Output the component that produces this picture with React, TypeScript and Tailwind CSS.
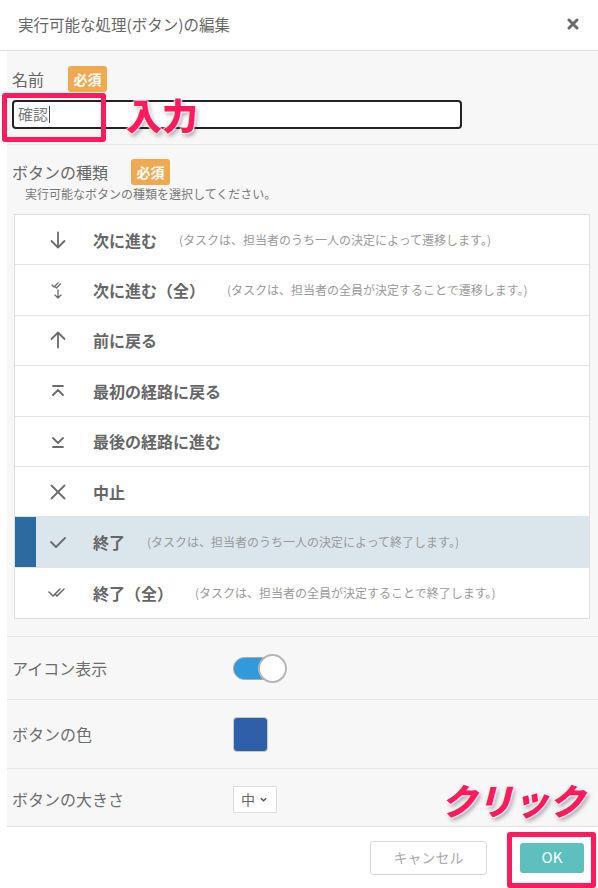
import React from 'react';

const FONT = 'font-["Noto_Sans_CJK_JP","Noto_Sans",sans-serif]';

type IconKind = 'down' | 'downAll' | 'up' | 'first' | 'last' | 'stop' | 'check' | 'checkAll';

function RowIcon({ kind }: { kind: IconKind }) {
  const common = {
    width: 20,
    height: 20,
    viewBox: '0 0 20 20',
    fill: 'none',
    stroke: '#6b6b6b',
    strokeWidth: 1.8,
    strokeLinecap: 'round' as const,
    strokeLinejoin: 'round' as const,
  };
  switch (kind) {
    case 'down':
      return (
        <svg {...common}>
          <path d="M10 2.5v15M3.5 11l6.5 6.5 6.5-6.5" />
        </svg>
      );
    case 'downAll':
      return (
        <svg {...common} strokeWidth={1.3}>
          <path d="M4 5l2 2 4-4M7 6.5l1.5 1.5 4-4" />
          <path d="M10 10v8M7 15l3 3 3-3" />
        </svg>
      );
    case 'up':
      return (
        <svg {...common}>
          <path d="M10 17.5v-15M3.5 9l6.5-6.5 6.5 6.5" />
        </svg>
      );
    case 'first':
      return (
        <svg {...common}>
          <path d="M5 5h10M5 14l5-5 5 5" />
        </svg>
      );
    case 'last':
      return (
        <svg {...common}>
          <path d="M5 7l5 5 5-5M5 16h10" />
        </svg>
      );
    case 'stop':
      return (
        <svg {...common}>
          <path d="M3.5 3.5l13 13M16.5 3.5l-13 13" />
        </svg>
      );
    case 'check':
      return (
        <svg {...common}>
          <path d="M3 10l5 5 9-9" />
        </svg>
      );
    case 'checkAll':
      return (
        <svg {...common} strokeWidth={1.6}>
          <path d="M1 9l4 4 7-7M7 11l2 2 7-7" />
        </svg>
      );
  }
}

const rows: { icon: IconKind; label: string; desc?: string; selected?: boolean }[] = [
  { icon: 'down', label: '次に進む', desc: '(タスクは、担当者のうち一人の決定によって遷移します。)' },
  { icon: 'downAll', label: '次に進む（全）', desc: '(タスクは、担当者の全員が決定することで遷移します。)' },
  { icon: 'up', label: '前に戻る' },
  { icon: 'first', label: '最初の経路に戻る' },
  { icon: 'last', label: '最後の経路に進む' },
  { icon: 'stop', label: '中止' },
  { icon: 'check', label: '終了', desc: '(タスクは、担当者のうち一人の決定によって終了します。)', selected: true },
  { icon: 'checkAll', label: '終了（全）', desc: '(タスクは、担当者の全員が決定することで終了します。)' },
];

function Badge() {
  return (
    <span className="inline-flex h-[26px] w-[39px] items-center justify-center rounded-[3px] bg-[#efa94f] text-[14px] font-bold text-white">
      必須
    </span>
  );
}

const outline =
  '[text-shadow:0_0_2px_#fff,0_0_2px_#fff,0_0_2px_#fff,0_0_3px_#fff,2px_3px_4px_rgba(0,0,0,0.35)]';

export default function App() {
  return (
    <div className={`relative h-[888px] w-[598px] overflow-hidden bg-white ${FONT} text-[#666]`}>
      {/* Header */}
      <div className="flex h-[51px] items-center justify-between border-b border-[#e2e2e2] pl-[18px] pr-[19px]">
        <span className="text-[15.5px] text-[#666]">実行可能な処理(ボタン)の編集</span>
        <svg width="12" height="12" viewBox="0 0 12 12" className="mb-[3px]">
          <path d="M2 2l8 8M10 2l-8 8" stroke="#6a6a6a" strokeWidth="3" strokeLinecap="round" />
        </svg>
      </div>

      {/* Body */}
      <div className="ml-[7px] h-[776px] border-b border-[#e2e2e2] bg-[#f7f7f7]">
        {/* Name */}
        <div className="h-[94px] border-b border-[#e5e5e5] pl-[5px] pt-[15px]">
          <div className="flex h-[26px] items-center gap-[24px]">
            <span className="text-[16px]">名前</span>
            <Badge />
          </div>
          <div className="mt-[8px] flex h-[29px] w-[450px] items-center rounded-[4px] border-2 border-[#222] bg-white pl-[4px] text-[15px] text-[#777]">
            確認<span className="ml-[1px] h-[17px] w-px bg-[#444]" />
          </div>
        </div>

        {/* Type */}
        <div className="flex flex-col border-b border-[#e5e5e5] pb-[17px] pt-[13px]">
          <div className="flex h-[28px] items-center gap-[23px] pl-[5px]">
            <span className="text-[16px]">ボタンの種類</span>
            <Badge />
          </div>
          <div className="pl-[18px] text-[12px] leading-[16px] text-[#777]">実行可能なボタンの種類を選択してください。</div>
          <div className="ml-[7px] mt-[12px] w-[576px] border border-[#dedede] bg-white">
            {rows.map((r, i) => (
              <div
                key={i}
                className={`flex h-[50.4px] items-center ${i < rows.length - 1 ? 'border-b border-[#e3e3e3]' : ''} ${
                  r.selected ? 'bg-[#dbe5ec]' : ''
                }`}
              >
                <div className={`h-full w-[21px] shrink-0 ${r.selected ? 'bg-[#2c6aa0]' : ''}`} />
                <div className="flex w-[43px] shrink-0 justify-center">
                  <RowIcon kind={r.icon} />
                </div>
                <span className="ml-[14px] text-[16px] font-bold text-[#666]">{r.label}</span>
                {r.desc && <span className="ml-[22px] text-[12px] text-[#999]">{r.desc}</span>}
              </div>
            ))}
          </div>
        </div>

        {/* Icon display */}
        <div className="flex h-[63px] items-center border-b border-[#e5e5e5] pl-[5px]">
          <span className="w-[221px] text-[16px] text-[#6d6d6d]">アイコン表示</span>
          <div className="relative h-[29px] w-[54px]">
            <div className="absolute left-0 top-[3px] h-[23px] w-[47px] rounded-full border border-[#aaa] bg-[#3299db]" />
            <div className="absolute right-0 top-0 h-[29px] w-[29px] rounded-full border-2 border-[#b5b5b5] bg-white" />
          </div>
        </div>

        {/* Color */}
        <div className="flex h-[69px] items-center border-b border-[#e5e5e5] pl-[5px]">
          <span className="w-[221px] text-[16px] text-[#6d6d6d]">ボタンの色</span>
          <div className="h-[35px] w-[35px] rounded-[4px] border border-[#c8c8c8] bg-[#2f5fa9]" />
        </div>

        {/* Size */}
        <div className="flex h-[60px] items-center pl-[5px]">
          <span className="w-[221px] text-[16px] text-[#6d6d6d]">ボタンの大きさ</span>
          <div className="flex h-[27px] w-[44px] items-center gap-[4px] border border-[#ddd] bg-white pl-[7px] text-[14px] text-[#666]">
            中
            <svg width="9" height="9" viewBox="0 0 10 10">
              <path d="M2 3.5l3 3 3-3" stroke="#555" strokeWidth="1.6" fill="none" />
            </svg>
          </div>
        </div>
      </div>

      {/* Footer */}
      <div className="flex h-[61px] items-center justify-end gap-[33px] pr-[14px]">
        <button className="h-[34px] w-[117px] rounded-[3px] border border-[#d8d8d8] bg-white text-[14px] text-[#aaa]">
          キャンセル
        </button>
        <button className="h-[30px] w-[64px] rounded-[3px] bg-[#5ebfbf] text-[15px] text-white">OK</button>
      </div>

      {/* Annotations */}
      <div className="absolute left-[2px] top-[93px] h-[49px] w-[104px] rounded-[3px] border-[5px] border-[#ff1a5e]" />
      <div className={`absolute left-[126px] top-[96px] text-[36px] font-black leading-none text-[#ff1a5e] ${outline}`}>
        入力
      </div>
      <div className={`absolute left-[441px] top-[781px] text-[36px] font-black italic leading-none text-[#ff1a5e] ${outline}`}>
        クリック
      </div>
      <div className="absolute left-[507px] top-[832px] h-[56px] w-[89px] rounded-[3px] border-[5px] border-[#ff1a5e]" />
    </div>
  );
}
